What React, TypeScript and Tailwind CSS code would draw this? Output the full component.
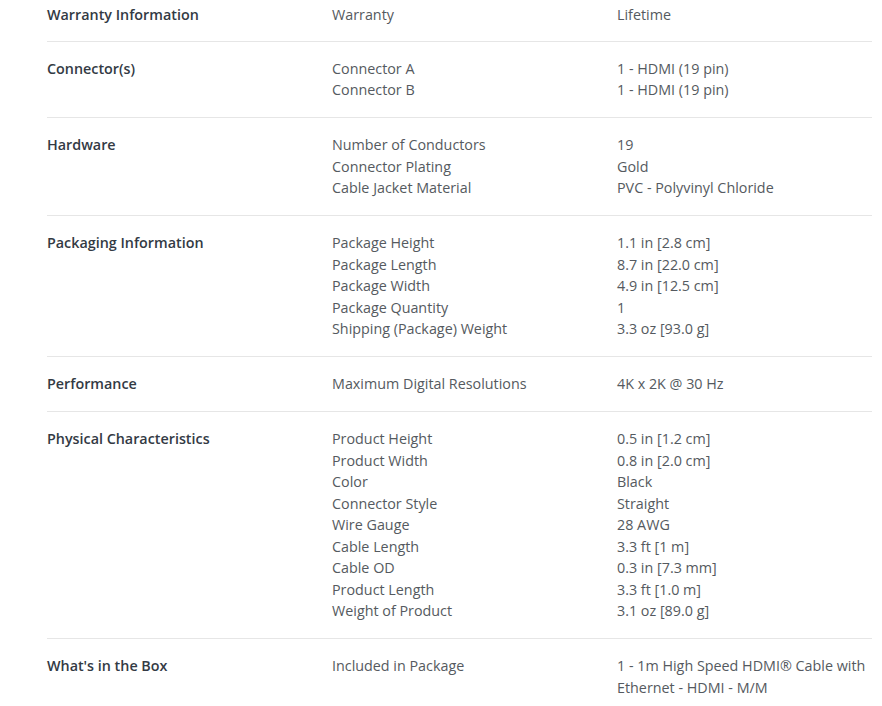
import React from "react";

type Row = { title: string; items: [string, string][] };

const rows: Row[] = [
  { title: "Warranty Information", items: [["Warranty", "Lifetime"]] },
  {
    title: "Connector(s)",
    items: [
      ["Connector A", "1 - HDMI (19 pin)"],
      ["Connector B", "1 - HDMI (19 pin)"],
    ],
  },
  {
    title: "Hardware",
    items: [
      ["Number of Conductors", "19"],
      ["Connector Plating", "Gold"],
      ["Cable Jacket Material", "PVC - Polyvinyl Chloride"],
    ],
  },
  {
    title: "Packaging Information",
    items: [
      ["Package Height", "1.1 in [2.8 cm]"],
      ["Package Length", "8.7 in [22.0 cm]"],
      ["Package Width", "4.9 in [12.5 cm]"],
      ["Package Quantity", "1"],
      ["Shipping (Package) Weight", "3.3 oz [93.0 g]"],
    ],
  },
  { title: "Performance", items: [["Maximum Digital Resolutions", "4K x 2K @ 30 Hz"]] },
  {
    title: "Physical Characteristics",
    items: [
      ["Product Height", "0.5 in [1.2 cm]"],
      ["Product Width", "0.8 in [2.0 cm]"],
      ["Color", "Black"],
      ["Connector Style", "Straight"],
      ["Wire Gauge", "28 AWG"],
      ["Cable Length", "3.3 ft [1 m]"],
      ["Cable OD", "0.3 in [7.3 mm]"],
      ["Product Length", "3.3 ft [1.0 m]"],
      ["Weight of Product", "3.1 oz [89.0 g]"],
    ],
  },
  {
    title: "What's in the Box",
    items: [["Included in Package", "1 - 1m High Speed HDMI® Cable with Ethernet - HDMI - M/M"]],
  },
];

export default function App() {
  return (
    <div
      className="w-[882px] h-[706px] overflow-hidden bg-white"
      style={{ fontFamily: '"Open Sans", "Noto Sans", sans-serif' }}
    >
      <div className="ml-[47px] w-[825px]">
        {rows.map((row, i) => (
          <div
            key={row.title}
            className={`grid grid-cols-[285px_285px_1fr] text-[14.33px] leading-[21.5px] ${
              i === 0 ? "pt-[4.25px] pb-[14.75px]" : "pt-[16.25px] pb-[16.25px]"
            } ${i < rows.length - 1 ? "border-b border-[#e6e6e6]" : ""}`}
          >
            <div className="font-semibold text-[#333a44]">{row.title}</div>
            <div className="text-[#555a60]">
              {row.items.map(([k]) => (
                <div key={k}>{k}</div>
              ))}
            </div>
            <div className="text-[#555a60]">
              {row.items.map(([k, v]) => (
                <div key={k}>{v}</div>
              ))}
            </div>
          </div>
        ))}
      </div>
    </div>
  );
}
